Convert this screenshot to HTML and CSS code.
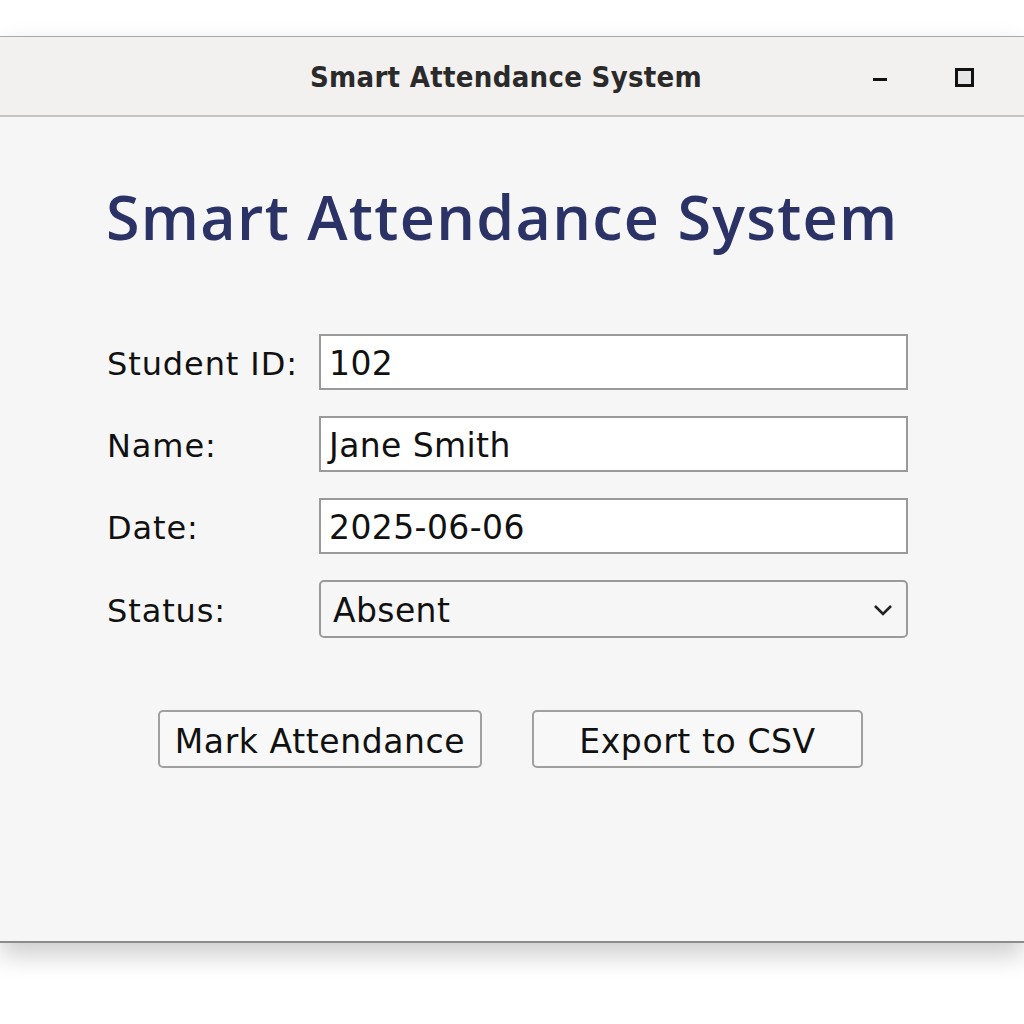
FILE: index.html
```html
<!DOCTYPE html>
<html>
<head>
<meta charset="utf-8">
<link rel="stylesheet" href="styles.css">
</head>
<body>
<div class="window">
  <div class="titlebar">
    <span class="title">Smart Attendance System</span>
    <div class="controls">
      <span class="minimize"></span>
      <span class="maximize"></span>
    </div>
  </div>
  <div class="content">
    <h1 class="heading">Smart Attendance System</h1>
    <div class="form">
      <label class="label">Student ID:</label>
      <div class="field">102</div>
      <label class="label">Name:</label>
      <div class="field">Jane Smith</div>
      <label class="label">Date:</label>
      <div class="field">2025-06-06</div>
      <label class="label">Status:</label>
      <div class="field select">
        <span>Absent</span>
        <svg class="chevron" width="20" height="12" viewBox="0 0 20 12"><path d="M2 2 L10 10 L18 2" fill="none" stroke="#222" stroke-width="2.6"/></svg>
      </div>
    </div>
    <div class="buttons">
      <div class="btn btn-mark">Mark Attendance</div>
      <div class="btn btn-export">Export to CSV</div>
    </div>
  </div>
</div>
</body>
</html>
```

FILE: styles.css
```css
html, body {
  margin: 0;
  padding: 0;
  background: #ffffff;
  width: 1024px;
  height: 1024px;
  overflow: hidden;
}
.window {
  margin-top: 36px;
  border-top: 1px solid #a9a9a9;
  border-bottom: 2px solid #8c8c8c;
  box-shadow: 0 12px 24px rgba(0,0,0,0.2);
  background: #f6f6f6;
}
.titlebar {
  height: 78px;
  background: #f3f1f0;
  border-bottom: 2px solid #c4c4c4;
  display: flex;
  align-items: center;
  justify-content: center;
  position: relative;
}
.title {
  font-family: "DejaVu Sans", sans-serif;
  font-stretch: condensed;
  font-weight: bold;
  font-size: 29px;
  letter-spacing: 0.3px;
  color: #2a2a2a;
  margin-right: 12px;
  margin-top: 2px;
}
.controls {
  position: absolute;
  right: 50px;
  top: 31px;
  display: flex;
  align-items: center;
  gap: 68px;
}
.minimize {
  width: 14px;
  height: 3px;
  background: #111;
  margin-top: 4px;
}
.maximize {
  width: 13px;
  height: 13px;
  border: 3px solid #111;
  background: #e6e6e6;
}
.content {
  height: 824px;
  padding: 0 0 0 106px;
  box-sizing: border-box;
}
.heading {
  margin: 0;
  padding-top: 64px;
  font-family: "Open Sans", sans-serif;
  font-weight: 600;
  font-size: 61px;
  color: #2b3266;
  line-height: 72px;
  letter-spacing: 1.3px;
}
.form {
  margin-top: 81px;
  display: grid;
  grid-template-columns: 213px 589px;
  row-gap: 26px;
  align-items: center;
}
.label {
  font-family: "DejaVu Sans", sans-serif;
  font-size: 32px;
  letter-spacing: 0.9px;
  color: #111;
  padding-left: 1px;
  padding-top: 4px;
}
.field {
  height: 56px;
  box-sizing: border-box;
  border: 2px solid #9a9a9a;
  background: #ffffff;
  font-family: "DejaVu Sans", sans-serif;
  font-size: 33px;
  letter-spacing: 0.4px;
  color: #111;
  display: flex;
  align-items: center;
  padding-left: 8px;
  padding-top: 3px;
}
.select {
  background: #f6f6f6;
  border-radius: 5px;
  justify-content: space-between;
  padding-left: 12px;
  padding-right: 13px;
  height: 58px;
}
.chevron {
  margin-top: -2px;
}
.buttons {
  margin-top: 72px;
  display: flex;
  gap: 50px;
  padding-left: 52px;
}
.btn {
  height: 58px;
  box-sizing: border-box;
  border: 2px solid #a0a0a0;
  border-radius: 5px;
  background: #f8f8f8;
  font-family: "DejaVu Sans", sans-serif;
  font-size: 33px;
  letter-spacing: 0.6px;
  color: #111;
  display: flex;
  align-items: center;
  justify-content: center;
  padding-top: 4px;
}
.btn-mark { width: 324px; }
.btn-export { width: 331px; }
```
